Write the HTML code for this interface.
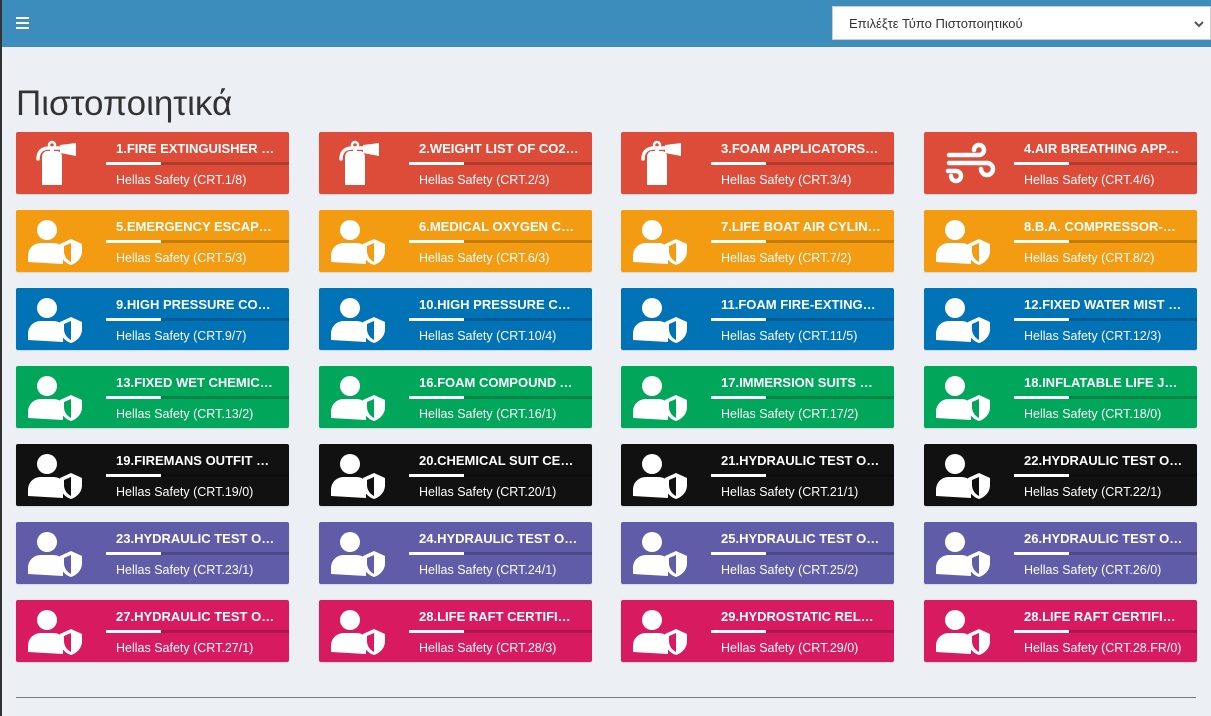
<!DOCTYPE html>
<html><head><meta charset="utf-8"><style>
*{box-sizing:border-box;margin:0;padding:0}
body{width:1211px;height:716px;overflow:hidden;background:#ecf0f5;font-family:"Liberation Sans","DejaVu Sans",sans-serif;position:relative}
.lb{position:absolute;left:0;top:0;width:2px;height:716px;background:#333}
.hdr{position:absolute;left:0;top:0;width:1211px;height:47px;background:#3c8dbc}
.burger{position:absolute;left:16px;top:17px;width:13px}
.burger i{display:block;height:2px;background:#fff;margin-bottom:3px}
.sel{position:absolute;left:832px;top:6px;width:379px;height:34px;background:#fff;border:1px solid #ccc;font-size:13px;color:#333;padding:9px 16px}
.sel svg{position:absolute;right:6px;top:13px}
h1{position:absolute;left:16px;top:84px;font-size:35px;font-weight:400;color:#333}
.card{position:absolute;width:273px;height:62px;border-radius:2px;color:#fff;box-shadow:0 1px 1px rgba(0,0,0,.1)}
.card svg{position:absolute;left:0;top:0}
.t{position:absolute;left:100px;top:9px;font-size:13px;font-weight:bold;white-space:nowrap;width:160px;overflow:hidden;text-overflow:ellipsis}
.bar{position:absolute;left:90px;right:0;top:30px;height:3px;background:rgba(0,0,0,.2)}
.bar i{display:block;width:55px;height:3px;background:#fff}
.s{position:absolute;left:100px;top:41px;font-size:12.5px;white-space:nowrap;width:168px;overflow:hidden;text-overflow:ellipsis}
hr{position:absolute;left:16px;top:697px;width:1180px;border:0;border-top:1px solid #777}
</style></head><body>
<div class="hdr"><div class="burger"><i></i><i></i><i></i></div>
<div class="sel">Επιλέξτε Τύπο Πιστοποιητικού<svg width="10" height="8"><path d="M1 2l4 4 4-4" stroke="#555" stroke-width="2" fill="none"/></svg></div></div>
<div class="lb"></div>
<h1>Πιστοποιητικά</h1>
<div id="c"></div>
<hr>
<script>
const ext='<svg width="90" height="62"><path d="M31 19h10c3 0 5 3 5 6v28h-20v-28c0-3 2-6 5-6z" fill="#fff"/><path d="M22 27c0-7 4-11 11-11h12" stroke="#fff" stroke-width="3.5" fill="none" stroke-linecap="round"/><circle cx="36" cy="13" r="3" fill="none" stroke="#fff" stroke-width="2.5"/><rect x="34" y="15" width="4" height="5" fill="#fff"/><path d="M44 13l16-2v13l-16-3z" fill="#fff"/></svg>';
const wind='<svg width="90" height="62"><g stroke="#fff" stroke-width="4.5" fill="none" stroke-linecap="round"><path d="M25 23h30a5 5 0 1 0-5-5"/><path d="M25 31h38a6 6 0 1 1-6 6"/><path d="M24 39h8a5 5 0 1 1-5 5"/></g></svg>';
const usr='<svg width="90" height="62"><circle cx="31" cy="20" r="10" fill="#fff"/><path d="M12 52v-6c0-8 6-13 13-13h12c5 0 8 2 10 4v17z" fill="#fff"/><path d="M55 29l11 5v7c0 7-5 12-11 14-6-2-11-7-11-14v-7z" fill="#fff"/><path d="M55 33l-7 3v5c0 5 3 9 7 11z" fill="currentColor"/></svg>';
const rows=[['#dd4b39',[['1.FIRE EXTINGUISHER CERTIFICATE','1/8',ext],['2.WEIGHT LIST OF CO2 BOTTLES','2/3',ext],['3.FOAM APPLICATORS CERT','3/4',ext],['4.AIR BREATHING APPARATUS','4/6',wind]]],
['#f39c12',[['5.EMERGENCY ESCAPE BREATHING','5/3'],['6.MEDICAL OXYGEN CERTIFICATE','6/3'],['7.LIFE BOAT AIR CYLINDERS','7/2'],['8.B.A. COMPRESSOR-AIR QUALITY','8/2']]],
['#0073b7',[['9.HIGH PRESSURE CO2 SYSTEM','9/7'],['10.HIGH PRESSURE CO2 SYSTEM','10/4'],['11.FOAM FIRE-EXTINGUISHING','11/5'],['12.FIXED WATER MIST SYSTEM','12/3']]],
['#00a65a',[['13.FIXED WET CHEMICAL SYSTEM','13/2'],['16.FOAM COMPOUND ANALYSIS','16/1'],['17.IMMERSION SUITS CERTIFICATE','17/2'],['18.INFLATABLE LIFE JACKETS','18/0']]],
['#111111',[['19.FIREMANS OUTFIT CERTIFICATE','19/0'],['20.CHEMICAL SUIT CERTIFICATE','20/1'],['21.HYDRAULIC TEST OF CYLINDERS','21/1'],['22.HYDRAULIC TEST OF CYLINDERS','22/1']]],
['#605ca8',[['23.HYDRAULIC TEST OF CYLINDERS','23/1'],['24.HYDRAULIC TEST OF CYLINDERS','24/1'],['25.HYDRAULIC TEST OF CYLINDERS','25/2'],['26.HYDRAULIC TEST OF CYLINDERS','26/0']]],
['#d81b60',[['27.HYDRAULIC TEST OF CYLINDERS','27/1'],['28.LIFE RAFT CERTIFICATE','28/3'],['29.HYDROSTATIC RELEASE UNIT','29/0'],['28.LIFE RAFT CERTIFICATE FR','28.FR/0']]]];
const xs=[16,319,621,924];let h='';
rows.forEach((r,i)=>r[1].forEach((c,j)=>{
 h+=`<div class="card" style="left:${xs[j]}px;top:${132+78*i}px;background:${r[0]};color:${r[0]}">${c[2]||usr}<div class="t" style="color:#fff">${c[0]}</div><div class="bar"><i></i></div><div class="s" style="color:#fff">Hellas Safety (CRT.${c[1]})</div></div>`;}));
document.getElementById('c').innerHTML=h;
</script>
</body></html>
